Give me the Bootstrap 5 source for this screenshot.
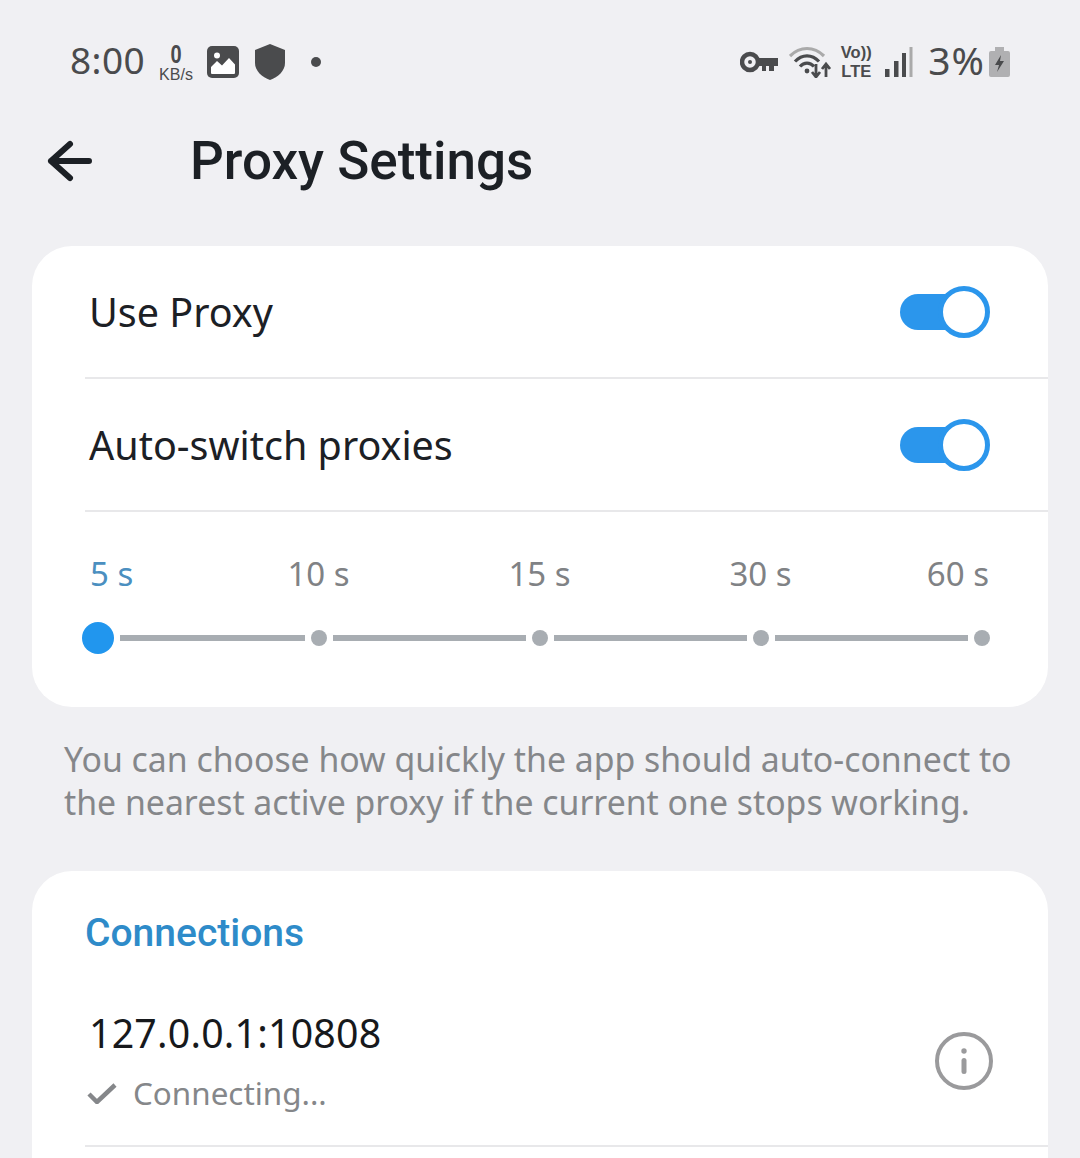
<!DOCTYPE html>
<html lang="en">
<head>
<meta charset="utf-8">
<title>Proxy Settings</title>
<link href="https://cdn.jsdelivr.net/npm/bootstrap@5.3.0/dist/css/bootstrap.min.css" rel="stylesheet">
<style>
html,body{height:1158px;overflow:hidden}
body{background:#f0f0f3;font-family:"Noto Sans","Open Sans",sans-serif;color:#1c2025}
svg{display:block;flex:none}
.status-strip{height:120px;padding:3px 70px 0 70px;color:#4a4b4d}
.clock{font-size:37px;line-height:1;letter-spacing:.4px;width:74px;margin-top:-5px}
.rate{width:36px;margin-left:14px;font-family:"Liberation Sans",sans-serif;font-size:16px;line-height:15px;text-align:center;height:40px}
.rate b{display:block;font-size:25px;line-height:25px;font-weight:700;transform:scaleX(.8)}
.batt-num{font-size:39px;line-height:1;letter-spacing:1px;margin-left:15px;margin-top:-5px}
.pic-ico{margin-left:13px}
.shield-ico{margin-left:16px}
.dot-ico{margin-left:26px}
.wifi-ico{margin-left:11px}
.volte{font-family:"Liberation Sans",sans-serif;font-size:16.5px;line-height:19px;font-weight:700;margin-left:9px;width:32px;white-space:nowrap}
.bars-ico{margin-left:13px}
.batt-ico{margin-left:4px}
.head-bar{height:126px;padding-bottom:44px;padding-left:46px}
.head-title{font:500 53px/1 Roboto,sans-serif;margin:0 0 0 98px}
.panel{background:#fff;border-radius:40px;margin:0 32px;overflow:hidden}
.panel-tall{height:287px;border-radius:40px 40px 0 0}
.panel-row{padding:0 58px 0 57px;height:131px}
.rule{height:2px;background:#e8e8ea;margin-left:53px}
.row-label{font-size:39.5px;line-height:1;padding-top:3px}
.switcher{width:90px;height:52px;position:relative}
.switcher i{position:absolute;left:0;top:8px;width:70px;height:36px;border-radius:18px;background:#2b96ec}
.switcher u{position:absolute;right:0;top:0;width:52px;height:52px;border-radius:50%;background:#fff;border:5px solid #2b96ec}
.ticks{display:grid;grid-template-columns:118px 221px 221px 221px 118px;font-size:33px;line-height:1;color:#808285;padding:45px 58px 0}
.ticks span{text-align:center}
.ticks span:first-child{text-align:left;color:#4b8fc0}
.ticks span:last-child{text-align:right}
.track{padding:32px 58px 53px 50px;height:117px}
.track b{display:block;border-radius:50%;background:#a8adb2;width:16px;height:16px;flex:none}
.track b.on{width:32px;height:32px;background:#2196ee;margin-right:6px}
.track s{display:block;height:6px;background:#a8adb2;flex:1 1 0;margin:0 6px}
.track s.lead{margin-left:0;flex:0 0 185px}
.hint{font-size:33.8px;line-height:43px;color:#85878a;margin:31px 32px 47px 64px;height:86px;white-space:nowrap}
.sect{font:500 39px/1 Roboto,"Noto Sans",sans-serif;color:#2e8bc9;padding:43px 53px 0;height:106px;margin:0}
.conn{padding:0 54px 0 57px;height:168px}
.addr{font-size:39.3px;line-height:1;color:#17191c;letter-spacing:.2px}
.stat{font-size:31.4px;line-height:1;color:#85878a;margin-top:24px}
.stat svg{margin-left:-2px}
</style>
</head>
<body>
<div class="status-strip d-flex align-items-center">
  <div class="clock">8:00</div>
  <div class="rate"><b>0</b>KB/s</div>
  <svg class="pic-ico" width="32" height="32" viewBox="0 0 32 32"><rect width="32" height="32" rx="5" fill="#4a4b4d"/><path d="M4 27V21L10 15L15 19.500L22 12L28 18.500V27Q28 28 27 28H5Q4 28 4 27Z" fill="#fff"/><circle cx="10" cy="9.500" r="3" fill="#fff"/></svg>
  <svg class="shield-ico" width="30" height="36" viewBox="0 0 30 36"><path d="M15 0L30 6V19C30 27 23 33 15 36C7 33 0 27 0 19V6Z" fill="#4a4b4d"/></svg>
  <svg class="dot-ico" width="10" height="10" viewBox="0 0 10 10"><circle cx="5" cy="5" r="5" fill="#4a4b4d"/></svg>
  <div class="ms-auto d-flex align-items-center">
    <svg width="38" height="22" viewBox="0 0 38 22"><circle cx="10" cy="11" r="8" fill="none" stroke="#4a4b4d" stroke-width="4.500"/><circle cx="10" cy="11" r="2" fill="#4a4b4d"/><path d="M17 7H38V15H34V20H29V15H26V20H22V15H17Z" fill="#4a4b4d"/></svg>
    <svg class="wifi-ico" width="42" height="32" viewBox="0 0 42 32"><path d="M1 10C11 0 25 0 35 10" fill="none" stroke="#aaa" stroke-width="3.200"/><path d="M6 15.500C13 8 23 8 30 15.500M11 20.500C15 16 21 16 25 20.500" fill="none" stroke="#4a4b4d" stroke-width="3.200"/><circle cx="18" cy="25" r="2.400" fill="#4a4b4d"/><path d="M27 18V30M23 26L27 31L31 26M37 31V19M33 23L37 18L41 23" fill="none" stroke="#4a4b4d" stroke-width="2.800"/></svg>
    <div class="volte text-center">Vo))<br>LTE</div>
    <svg class="bars-ico" width="28" height="30" viewBox="0 0 28 30"><rect x="0" y="22" width="4.500" height="8" fill="#4a4b4d"/><rect x="9" y="14" width="4.500" height="16" fill="#4a4b4d"/><rect x="17" y="6" width="4" height="24" fill="#4a4b4d"/><rect x="24.500" y="0" width="3" height="30" fill="#aaa"/></svg>
    <div class="batt-num">3%</div>
    <svg class="batt-ico" width="21" height="30" viewBox="0 0 21 30"><path d="M6 0H15V4H19Q21 4 21 6V28Q21 30 19 30H2Q0 30 0 28V6Q0 4 2 4H6Z" fill="#b0b0b2"/><path d="M12 8L6 18H10L8 25L15 14H11Z" fill="#4a4b4d"/></svg>
  </div>
</div>
<div class="head-bar d-flex align-items-center">
  <svg width="46" height="44" viewBox="0 0 46 44"><path d="M43 22H5M24 5L5 22L24 39" fill="none" stroke="#1c2025" stroke-width="6" stroke-linecap="round" stroke-linejoin="round"/></svg>
  <h1 class="head-title">Proxy Settings</h1>
</div>
<div class="panel">
  <div class="panel-row d-flex align-items-center justify-content-between"><span class="row-label">Use Proxy</span><div class="switcher"><i></i><u></u></div></div>
  <div class="rule"></div>
  <div class="panel-row d-flex align-items-center justify-content-between"><span class="row-label">Auto-switch proxies</span><div class="switcher"><i></i><u></u></div></div>
  <div class="rule"></div>
  <div class="ticks"><span>5 s</span><span>10 s</span><span>15 s</span><span>30 s</span><span>60 s</span></div>
  <div class="track d-flex align-items-center"><b class="on"></b><s class="lead"></s><b></b><s></s><b></b><s></s><b></b><s></s><b></b></div>
</div>
<p class="hint">You can choose how quickly the app should auto-connect to<br>the nearest active proxy if the current one stops working.</p>
<div class="panel panel-tall">
  <h2 class="sect">Connections</h2>
  <div class="conn d-flex align-items-center justify-content-between">
    <div>
      <div class="addr">127.0.0.1:10808</div>
      <div class="stat d-flex align-items-center gap-3"><svg width="30" height="22" viewBox="0 0 30 22"><path d="M2 12L10 20L28 3" fill="none" stroke="#85878a" stroke-width="4.500"/></svg>Connecting...</div>
    </div>
    <svg width="60" height="60" viewBox="0 0 60 60"><circle cx="30" cy="30" r="27" fill="none" stroke="#9a9a9c" stroke-width="4"/><circle cx="30" cy="20" r="2.700" fill="#9a9a9c"/><rect x="27.500" y="27" width="5" height="16" rx="2.500" fill="#9a9a9c"/></svg>
  </div>
  <div class="rule"></div>
</div>
</body>
</html>
